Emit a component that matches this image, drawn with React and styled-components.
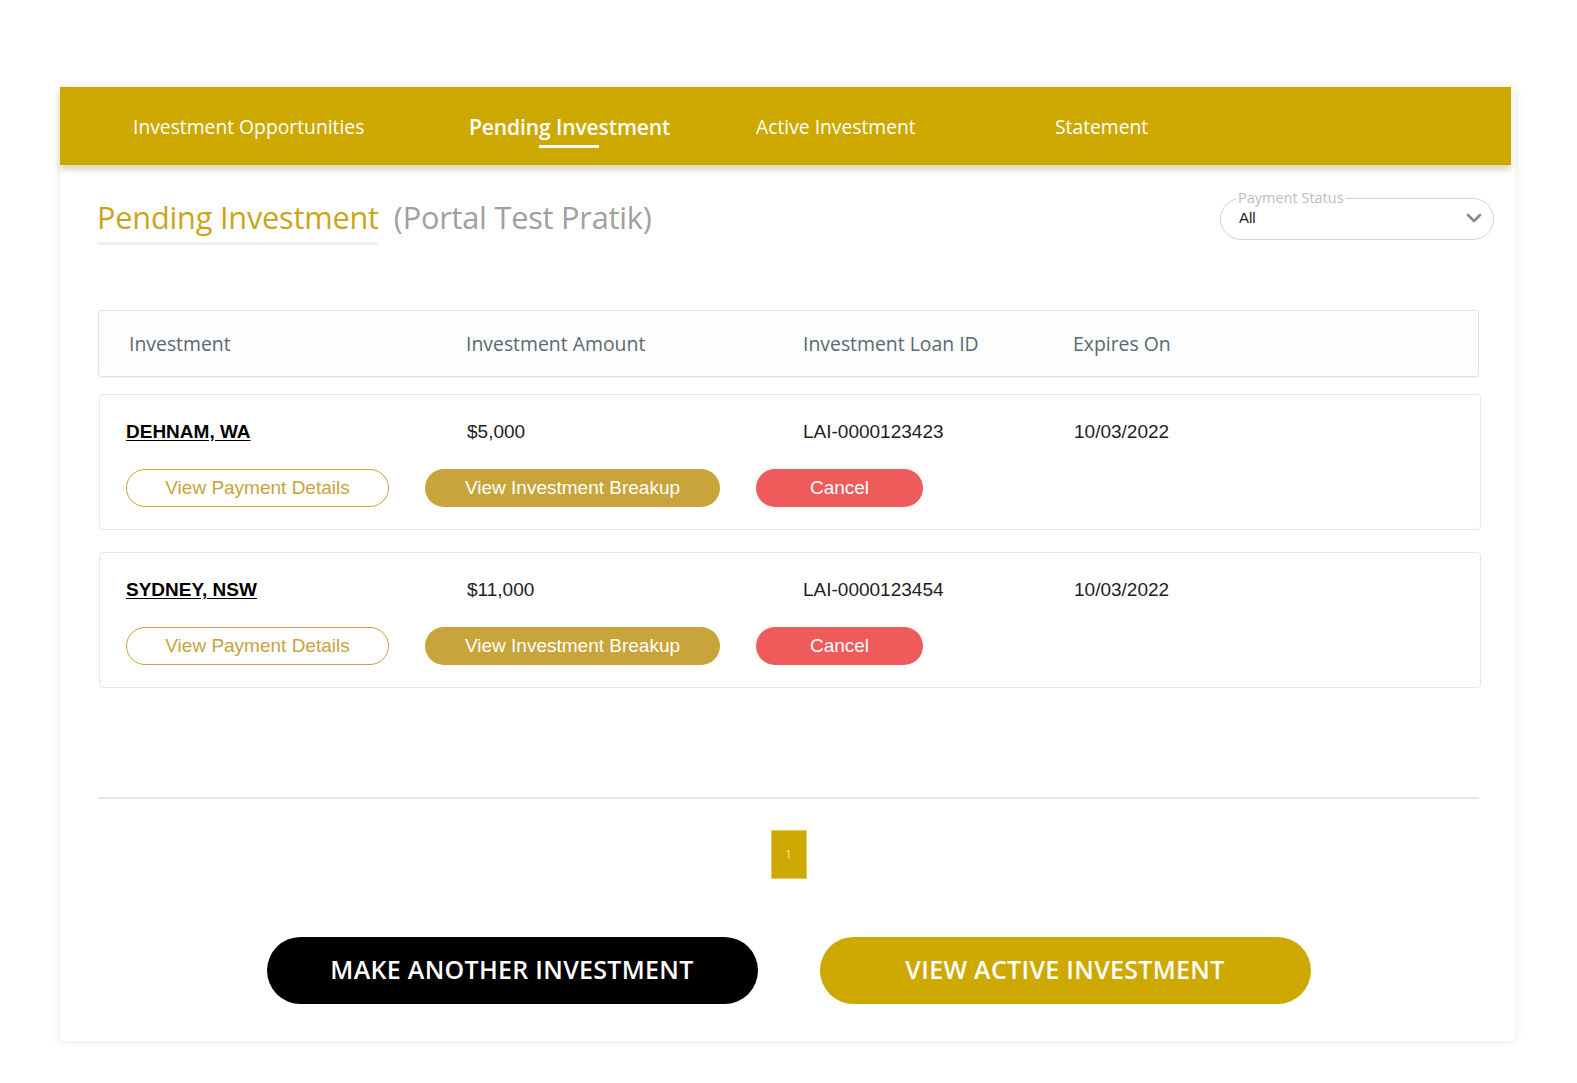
import React from "react";
import styled, { createGlobalStyle } from "styled-components";

const Global = createGlobalStyle`
  html, body { margin: 0; padding: 0; background: #fff; }
  body { font-family: "Open Sans", "Liberation Sans", sans-serif; }
  * { box-sizing: border-box; }
`;

const Page = styled.div`
  padding: 87px 0 43px 60px;
`;

const Card = styled.div`
  width: 1455px;
  background: #fff;
  box-shadow: 0 0 9px rgba(0, 0, 0, 0.1);
  padding-bottom: 37px;
`;

const Nav = styled.nav`
  height: 78px;
  background: #cda900;
  display: flex;
  align-items: center;
  padding-left: 73px;
  margin-right: 4px;
  box-shadow: 0 5px 6px rgba(140, 120, 20, 0.28);
  position: relative;
  z-index: 1;
`;

const NavItem = styled.div`
  position: relative;
  width: ${(p) => p.$w || "auto"};
  font-family: "Open Sans", sans-serif;
  font-size: ${(p) => (p.$active ? "21px" : "19.3px")};
  font-weight: ${(p) => (p.$active ? 600 : 400)};
  letter-spacing: ${(p) => (p.$active ? "-0.1px" : "0")};
  color: #fff;
  line-height: 26px;
  white-space: nowrap;
  padding-top: 2px;
`;

const NavLabel = styled.span`
  position: relative;
  display: inline-block;
  &::after {
    content: "";
    display: ${(p) => (p.$active ? "block" : "none")};
    position: absolute;
    left: 50%;
    margin-left: -31px;
    width: 60px;
    height: 3px;
    bottom: -8px;
    background: #fff;
  }
`;

const TitleRow = styled.div`
  display: flex;
  justify-content: space-between;
  align-items: flex-start;
  padding: 24px 21px 0 37px;
`;

const Title = styled.div`
  display: flex;
  align-items: flex-start;
  margin-top: 8px;
`;

const TitleMain = styled.h1`
  margin: 0;
  font-family: "Open Sans", sans-serif;
  font-weight: 400;
  font-size: 30.7px;
  letter-spacing: -0.2px;
  line-height: 40px;
  color: #c9a618;
  padding-bottom: 5px;
  border-bottom: 3px solid #f1f1f1;
`;

const TitleSub = styled.span`
  margin-left: 15px;
  font-family: "Open Sans", sans-serif;
  font-size: 30.7px;
  letter-spacing: -0.2px;
  line-height: 40px;
  color: #a0a0a0;
`;

const Select = styled.fieldset`
  margin: 1px 0 0 0;
  width: 274px;
  border: 1px solid #d2d2d2;
  border-radius: 22px;
  padding: 0 12px 10px 18px;
  position: relative;
`;

const Legend = styled.legend`
  font-family: "Open Sans", sans-serif;
  font-size: 14.5px;
  line-height: 16px;
  color: #bdbdbd;
  padding: 0 2px;
  margin-left: -3px;
`;

const SelectValue = styled.div`
  display: flex;
  justify-content: space-between;
  align-items: center;
  font-family: "Liberation Sans", Arial, sans-serif;
  font-size: 15px;
  line-height: 22px;
  color: #222;
  margin-top: 1px;
`;

const Content = styled.div`
  padding: 0 36px 0 38px;
  margin-top: 65px;
`;

const TableHead = styled.div`
  height: 67px;
  display: grid;
  grid-template-columns: 337px 337px 270px 1fr;
  align-items: center;
  padding-left: 30px;
  border: 1px solid #e2e2e2;
  border-radius: 3px;
  background: #fdfdfd;
  box-shadow: 0 1px 2px rgba(0, 0, 0, 0.05);
`;

const HeadCell = styled.div`
  font-family: "Open Sans", sans-serif;
  font-size: 19.4px;
  color: #5a6874;
`;

const RowCard = styled.div`
  margin-top: ${(p) => p.$mt}px;
  margin-right: -2px;
  margin-left: 1px;
  height: 136px;
  border: 1px solid #e8e8e8;
  border-radius: 4px;
  padding: 26px 0 0 26px;
  background: #fff;
`;

const RowGrid = styled.div`
  display: grid;
  grid-template-columns: 341px 336px 271px 1fr;
  align-items: center;
  height: 22px;
`;

const Cell = styled.div`
  font-family: "Liberation Sans", Arial, sans-serif;
  font-size: 19px;
  line-height: 22px;
  color: #1e1e1e;
`;

const PlaceLink = styled.a`
  font-family: "Liberation Sans", Arial, sans-serif;
  font-size: 19px;
  font-weight: 700;
  line-height: 22px;
  color: #000;
  text-decoration: underline;
  text-underline-offset: 2px;
`;

const Actions = styled.div`
  display: flex;
  gap: 36px;
  margin-top: 26px;
`;

const PillButton = styled.button`
  width: ${(p) => p.$w}px;
  height: 38px;
  border-radius: 20px;
  font-family: "Liberation Sans", Arial, sans-serif;
  font-size: 19px;
  cursor: pointer;
  padding: 0;
  ${(p) =>
    p.$variant === "outline"
      ? `background: #fff; border: 1px solid #c9a43a; color: #c8a43a;`
      : p.$variant === "danger"
      ? `background: #ef5b5b; border: none; color: #fff;`
      : `background: #c8a43a; border: none; color: #fff;`}
`;

const Divider = styled.hr`
  margin: 109px 0 0 0;
  border: none;
  height: 2px;
  background: #e6e6e6;
`;

const Pager = styled.div`
  display: flex;
  justify-content: center;
  margin-top: 31px;
`;

const PageBox = styled.div`
  width: 36px;
  height: 49px;
  background: #cda900;
  border: 1px solid #e2cc55;
  display: flex;
  align-items: center;
  justify-content: center;
  font-family: "Open Sans", sans-serif;
  font-size: 12px;
  color: #f4e38a;
`;

const BottomRow = styled.div`
  display: flex;
  justify-content: center;
  gap: 62px;
  margin-top: 58px;
`;

const BigButton = styled.button`
  width: 491px;
  height: 67px;
  border-radius: 34px;
  border: none;
  background: ${(p) => (p.$gold ? "#cda900" : "#000")};
  color: #fff;
  font-family: "Open Sans", sans-serif;
  font-weight: 600;
  font-size: 25px;
  letter-spacing: 0.3px;
  padding: 0 0 3px 0;
  cursor: pointer;
`;

const Chevron = () => (
  <svg width="16" height="12" viewBox="0 0 16 12" style={{ marginRight: -1 }}>
    <polyline
      points="2,3 8,9 14,3"
      fill="none"
      stroke="#8a8a8a"
      strokeWidth="2.6"
      strokeLinecap="round"
      strokeLinejoin="round"
    />
  </svg>
);

const rows = [
  { place: "DEHNAM, WA", amount: "$5,000", id: "LAI-0000123423", exp: "10/03/2022", mt: 17 },
  { place: "SYDNEY, NSW", amount: "$11,000", id: "LAI-0000123454", exp: "10/03/2022", mt: 22 },
];

export default function App() {
  return (
    <Page>
      <Global />
      <Card>
        <Nav>
          <NavItem $w="336px"><NavLabel>Investment Opportunities</NavLabel></NavItem>
          <NavItem $w="287px" $active><NavLabel $active>Pending Investment</NavLabel></NavItem>
          <NavItem $w="299px"><NavLabel>Active Investment</NavLabel></NavItem>
          <NavItem><NavLabel>Statement</NavLabel></NavItem>
        </Nav>

        <TitleRow>
          <Title>
            <TitleMain>Pending Investment</TitleMain>
            <TitleSub>(Portal Test Pratik)</TitleSub>
          </Title>
          <Select>
            <Legend>Payment Status</Legend>
            <SelectValue>
              <span>All</span>
              <Chevron />
            </SelectValue>
          </Select>
        </TitleRow>

        <Content>
          <TableHead>
            <HeadCell>Investment</HeadCell>
            <HeadCell>Investment Amount</HeadCell>
            <HeadCell>Investment Loan ID</HeadCell>
            <HeadCell>Expires On</HeadCell>
          </TableHead>

          {rows.map((r) => (
            <RowCard key={r.id} $mt={r.mt}>
              <RowGrid>
                <Cell><PlaceLink href="#">{r.place}</PlaceLink></Cell>
                <Cell>{r.amount}</Cell>
                <Cell>{r.id}</Cell>
                <Cell>{r.exp}</Cell>
              </RowGrid>
              <Actions>
                <PillButton $w={263} $variant="outline">View Payment Details</PillButton>
                <PillButton $w={295}>View Investment Breakup</PillButton>
                <PillButton $w={167} $variant="danger">Cancel</PillButton>
              </Actions>
            </RowCard>
          ))}

          <Divider />
          <Pager>
            <PageBox>1</PageBox>
          </Pager>
          <BottomRow>
            <BigButton>MAKE ANOTHER INVESTMENT</BigButton>
            <BigButton $gold>VIEW ACTIVE INVESTMENT</BigButton>
          </BottomRow>
        </Content>
      </Card>
    </Page>
  );
}
